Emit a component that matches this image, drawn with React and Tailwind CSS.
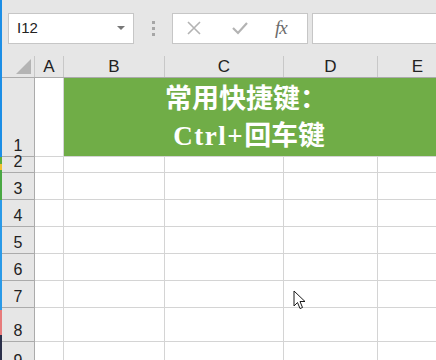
import React from "react";

const cols = ["A", "B", "C", "D", "E"];
const rows = [
  { n: "1", h: "h-[79px]" },
  { n: "2", h: "h-[16px]" },
  { n: "3", h: "h-[27px]" },
  { n: "4", h: "h-[27px]" },
  { n: "5", h: "h-[27px]" },
  { n: "6", h: "h-[27px]" },
  { n: "7", h: "h-[27px]" },
  { n: "8", h: "h-[34px]" },
  { n: "9", h: "h-[30px]" },
];
const colW = ["w-[29px]", "w-[101px]", "w-[119px]", "w-[94px]", "w-[80px]"];

const Cursor = () => (
  <svg className="absolute left-[293px] top-[290px]" width="14" height="21" viewBox="0 0 14 21">
    <path
      d="M1 1 L1 16 L4.5 12.5 L7 18.5 L9.5 17.5 L7 11.5 L12 11.5 Z"
      fill="#fff"
      stroke="#1a1a1a"
      strokeWidth="1"
      strokeLinejoin="miter"
    />
  </svg>
);

export default function App() {
  return (
    <div className="relative w-[436px] h-[360px] overflow-hidden flex bg-white font-['Liberation_Sans',sans-serif]">
      {/* desktop edge peeking through */}
      <div className="w-[2px] flex flex-col shrink-0">
        <div className="h-[157px] bg-[#1c8ee6]" />
        <div className="h-[7px] bg-[#5cae3a]" />
        <div className="h-[6px] bg-[#f0c030]" />
        <div className="h-[30px] bg-[#4aa843]" />
        <div className="h-[110px] bg-[#2a9ae8]" />
        <div className="h-[25px] bg-[#e77b7b]" />
        <div className="flex-1 bg-[#2a2f4a]" />
      </div>

      <div className="flex-1 flex flex-col">
        {/* formula bar */}
        <div className="h-[56px] bg-[#e6e6e6] flex items-center pl-[6px] shrink-0">
          <div className="w-[126px] h-[31px] bg-white border border-[#c6c6c6] flex items-center justify-between pl-[8px] pr-[8px]">
            <span className="text-[15px] text-[#222]">I12</span>
            <span className="w-0 h-0 border-l-[4px] border-r-[4px] border-t-[4px] border-l-transparent border-r-transparent border-t-[#777]" />
          </div>
          <div className="w-[38px] flex flex-col items-center gap-[3px]">
            <span className="w-[3px] h-[3px] bg-[#a6a6a6]" />
            <span className="w-[3px] h-[3px] bg-[#a6a6a6]" />
            <span className="w-[3px] h-[3px] bg-[#a6a6a6]" />
          </div>
          <div className="w-[136px] h-[31px] bg-white border border-[#c6c6c6] flex items-center">
            <svg className="ml-[14px]" width="14" height="14" viewBox="0 0 14 14">
              <path d="M1 1 L13 13 M13 1 L1 13" stroke="#b3b3b3" strokeWidth="1.6" />
            </svg>
            <svg className="ml-[31px]" width="16" height="14" viewBox="0 0 16 14">
              <path d="M1 7 L6 12 L15 2" stroke="#b3b3b3" strokeWidth="2.2" fill="none" />
            </svg>
            <span className="ml-[27px] font-['Liberation_Serif',serif] italic text-[19px] text-[#6b6b6b] tracking-[-1px]">
              fx
            </span>
          </div>
          <div className="ml-[4px] flex-1 h-[31px] bg-white border border-[#c6c6c6] border-r-0" />
        </div>

        {/* column headers */}
        <div className="flex h-[22px] shrink-0 bg-[#e6e6e6] border-b border-[#ababab]">
          <div className="w-[33px] border-r border-[#c8c8c8] relative">
            <span className="absolute right-[3px] bottom-[3px] w-0 h-0 border-l-[15px] border-t-[15px] border-l-transparent border-t-transparent border-b-0 border-r-0 [border-bottom:15px_solid_#b4b4b4]" />
          </div>
          {cols.map((c, i) => (
            <div
              key={c}
              className={`${colW[i]} shrink-0 border-r border-[#c8c8c8] flex items-end justify-center text-[17px] leading-[20px] text-[#222]`}
            >
              {c}
            </div>
          ))}
        </div>

        {/* rows */}
        {rows.map((r) => (
          <div key={r.n} className={`flex ${r.h} shrink-0`}>
            <div className="w-[33px] shrink-0 bg-[#e6e6e6] border-r border-b border-[#ababab] flex items-end justify-center text-[16px] leading-[17px] text-[#222] pb-[2px]">
              {r.n}
            </div>
            <div className="w-[29px] shrink-0 border-r border-b border-[#d4d4d4]" />
            {r.n === "1" ? (
              <div className="flex-1 bg-[#70ad47] border-b border-[#d4d4d4] pl-[101px] pt-[3px] text-white font-bold text-[27px] leading-[37px] whitespace-pre font-['Liberation_Serif','Noto_Sans_CJK_SC',serif]">
                <div>常用快捷键：</div>
                <div>
                  <span className="tracking-[1.5px]"> Ctrl+</span>回车键
                </div>
              </div>
            ) : (
              <>
                <div className="w-[101px] shrink-0 border-r border-b border-[#d4d4d4]" />
                <div className="w-[119px] shrink-0 border-r border-b border-[#d4d4d4]" />
                <div className="w-[94px] shrink-0 border-r border-b border-[#d4d4d4]" />
                <div className="flex-1 border-b border-[#d4d4d4]" />
              </>
            )}
          </div>
        ))}
      </div>

      <Cursor />
    </div>
  );
}
